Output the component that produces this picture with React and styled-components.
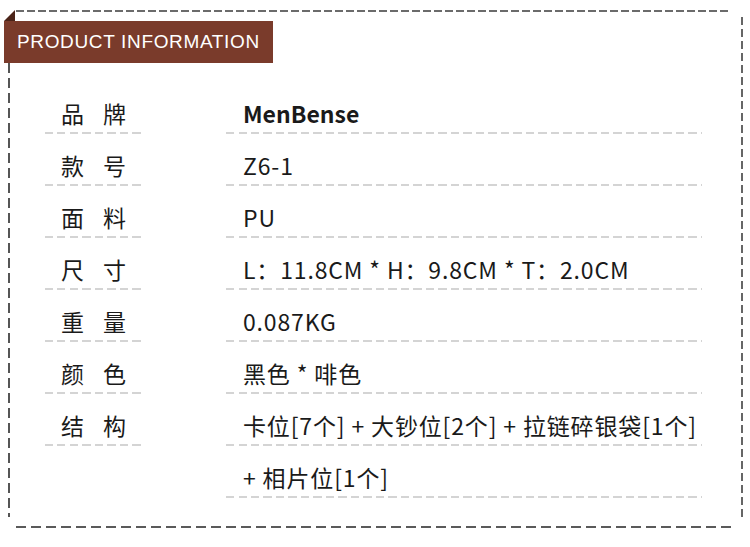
import React from 'react'
import styled, { createGlobalStyle } from 'styled-components'

const GlobalStyle = createGlobalStyle`
    html, body {
        margin: 0;
        padding: 0;
        background: #ffffff;
    }
`

const dashH = (color, dash, gap) =>
    `repeating-linear-gradient(to right, ${color} 0 ${dash}px, transparent ${dash}px ${dash + gap}px)`
const dashV = (color, dash, gap) =>
    `repeating-linear-gradient(to bottom, ${color} 0 ${dash}px, transparent ${dash}px ${dash + gap}px)`

const Page = styled.div`
    width: 750px;
    height: 547px;
    box-sizing: border-box;
    padding-top: 10px;
    font-family: "Noto Sans CJK SC", "Noto Sans", sans-serif;
    color: #1a1a1a;
    background:
        ${dashH('#6b6b6b', 8, 3)} 16px 10px / 715px 2px no-repeat,
        ${dashH('#5a5a5a', 10, 5)} 16px 526px / 715px 2px no-repeat,
        ${dashV('#555', 10, 5)} 8px 63px / 2px 454px no-repeat,
        ${dashV('#666', 8, 4)} 741px 17px / 2px 500px no-repeat;
`

const Banner = styled.div`
    position: relative;
    display: flex;
    align-items: center;
    width: 269px;
    height: 42px;
    margin: 11px 0 0 4px;
    padding-left: 13px;
    box-sizing: border-box;
    background: #7a3b2b;
    color: #fff;
    font-family: "Liberation Sans", Arial, sans-serif;
    font-size: 19px;
    letter-spacing: 0.65px;
    white-space: nowrap;

    &::before {
        content: '';
        position: absolute;
        left: 0;
        top: -11px;
        width: 11px;
        height: 11px;
        background: #4a2318;
        clip-path: polygon(0 100%, 100% 0, 100% 100%);
    }
`

const Table = styled.div`
    display: grid;
    grid-template-columns: 100px 476px;
    column-gap: 81px;
    margin: 19px 0 0 45px;
`

const Cell = styled.div`
    height: 52px;
    box-sizing: border-box;
    display: flex;
    align-items: flex-end;
    padding: 0 0 6px 17px;
    font-size: 23px;
    line-height: 30px;
    white-space: nowrap;
    background: ${({ $rule }) => ($rule ? `${dashH('#d4d4d4', 8, 4.5)} left bottom / 100% 2px no-repeat` : 'none')};
`

const LabelCell = styled(Cell)`
    padding-left: 16px;
    gap: 19px;
`

const ValueCell = styled(Cell)`
    font-weight: ${({ $bold }) => ($bold ? 700 : 400)};
    letter-spacing: ${({ $bold }) => ($bold ? '0' : '0.85px')};
`

const rows = [
    { label: '品牌', value: 'MenBense', bold: true },
    { label: '款号', value: 'Z6-1' },
    { label: '面料', value: 'PU' },
    { label: '尺寸', value: 'L：11.8CM * H：9.8CM * T：2.0CM' },
    { label: '重量', value: '0.087KG' },
    { label: '颜色', value: '黑色 * 啡色' },
    { label: '结构', value: '卡位[7个] + 大钞位[2个] + 拉链碎银袋[1个]' },
    { label: '', value: '+ 相片位[1个]' },
]

function App() {
    return (
        <>
            <GlobalStyle />
            <Page>
                <Banner>PRODUCT INFORMATION</Banner>
                <Table>
                    {rows.map((row, i) => (
                        <React.Fragment key={i}>
                            <LabelCell $rule={!!row.label}>
                                {row.label.split('').map((ch, j) => (
                                    <span key={j}>{ch}</span>
                                ))}
                            </LabelCell>
                            <ValueCell $rule $bold={row.bold}>{row.value}</ValueCell>
                        </React.Fragment>
                    ))}
                </Table>
            </Page>
        </>
    )
}

export default App
